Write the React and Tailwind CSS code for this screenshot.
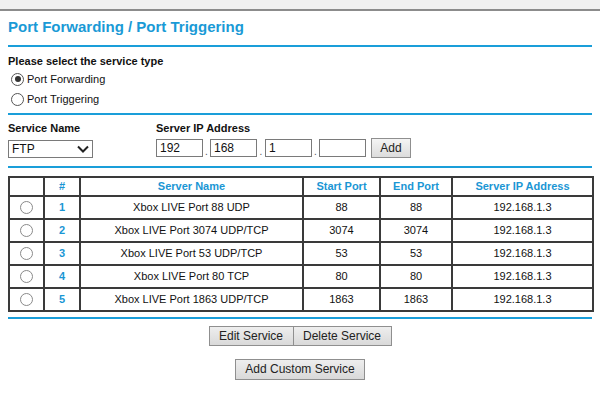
import React from 'react';

const rows = [
  { id: 1, name: 'Xbox LIVE Port 88 UDP', start: '88', end: '88', ip: '192.168.1.3' },
  { id: 2, name: 'Xbox LIVE Port 3074 UDP/TCP', start: '3074', end: '3074', ip: '192.168.1.3' },
  { id: 3, name: 'Xbox LIVE Port 53 UDP/TCP', start: '53', end: '53', ip: '192.168.1.3' },
  { id: 4, name: 'Xbox LIVE Port 80 TCP', start: '80', end: '80', ip: '192.168.1.3' },
  { id: 5, name: 'Xbox LIVE Port 1863 UDP/TCP', start: '1863', end: '1863', ip: '192.168.1.3' },
];

function Radio({ checked, light }) {
  return (
    <span
      className={`inline-flex items-center justify-center w-[13px] h-[13px] rounded-full border bg-white ${
        light ? 'border-[#8a8a8a]' : 'border-[#555]'
      }`}
    >
      {checked && <span className="w-[6px] h-[6px] rounded-full bg-[#333]" />}
    </span>
  );
}

function Divider({ className = '' }) {
  return <div className={`h-[2px] bg-[#1a9ed9] ${className}`} />;
}

function IpBox({ value }) {
  return (
    <input
      readOnly
      value={value}
      className="w-[47px] h-[18px] border border-[#7a7a7a] px-[3px] text-[12px] text-[#111] outline-none"
    />
  );
}

export default function App() {
  const cell = 'border-2 border-[#3a3a3a] text-center';
  return (
    <div className="w-[600px] h-[410px] bg-white text-[11px] text-[#111] font-['Liberation_Sans',Arial,sans-serif] overflow-hidden">
      {/* browser chrome strip */}
      <div className="h-[9px] bg-[#f1f1f1]" />
      <div className="h-[2px] bg-[#8c8c8c]" />

      <div className="px-2">
        <h1 className="mt-[7px] h-[18px] leading-[18px] text-[15px] font-bold text-[#1a9ad6]">
          Port Forwarding / Port Triggering
        </h1>
        <Divider className="mt-[9px]" />

        {/* service type */}
        <div className="mt-[7px] font-bold leading-[14px]">Please select the service type</div>
        <div className="mt-[1px] flex flex-col">
          <label className="flex items-center h-[20px] pl-[3px] gap-[3px]">
            <Radio checked />
            <span>Port Forwarding</span>
          </label>
          <label className="flex items-center h-[20px] pl-[3px] gap-[3px]">
            <Radio />
            <span>Port Triggering</span>
          </label>
        </div>
        <Divider className="mt-[4px]" />

        {/* service name / ip */}
        <div className="mt-[6px] flex">
          <div className="w-[148px]">
            <div className="font-bold leading-[14px]">Service Name</div>
            <div className="mt-[5px] w-[85px] h-[18px] border border-[#7a7a7a] flex items-center justify-between pl-[3px] pr-[3px] text-[12px]">
              <span>FTP</span>
              <svg width="12" height="8" viewBox="0 0 12 8" fill="none">
                <path d="M1 1.5 L6 6.5 L11 1.5" stroke="#222" strokeWidth="2" />
              </svg>
            </div>
          </div>
          <div>
            <div className="font-bold leading-[14px]">Server IP Address</div>
            <div className="mt-[3px] flex items-end">
              <div className="flex items-end pb-[1px]">
                <IpBox value="192" />
                <span className="w-[7px] text-center text-[10px] leading-[10px] text-[#555]">.</span>
                <IpBox value="168" />
                <span className="w-[8px] text-center text-[10px] leading-[10px] text-[#555]">.</span>
                <IpBox value="1" />
                <span className="w-[7px] text-center text-[10px] leading-[10px] text-[#555]">.</span>
                <IpBox value="" />
              </div>
              <button className="ml-[5px] w-[40px] h-[20px] border border-[#8f8f8f] bg-gradient-to-b from-[#f4f4f4] to-[#dcdcdc] text-[12px] text-[#222]">
                Add
              </button>
            </div>
          </div>
        </div>
        <Divider className="mt-[8px]" />

        {/* table */}
        <table className="mt-[8px] w-[584px] border-collapse table-fixed border-2 border-[#3a3a3a]">
          <colgroup>
            <col className="w-[35px]" />
            <col className="w-[36px]" />
            <col className="w-[223px]" />
            <col className="w-[77px]" />
            <col className="w-[72px]" />
            <col className="w-[141px]" />
          </colgroup>
          <thead>
            <tr className="h-[18px] text-[#1a96d4] font-bold">
              <th className={cell}></th>
              <th className={cell}>#</th>
              <th className={cell}>Server Name</th>
              <th className={cell}>Start Port</th>
              <th className={cell}>End Port</th>
              <th className={cell}>Server IP Address</th>
            </tr>
          </thead>
          <tbody>
            {rows.map((r) => (
              <tr key={r.id} className="h-[23px]">
                <td className={cell}>
                  <span className="flex justify-center">
                    <Radio light />
                  </span>
                </td>
                <td className={`${cell} text-[#1a96d4] font-bold`}>{r.id}</td>
                <td className={cell}>{r.name}</td>
                <td className={cell}>{r.start}</td>
                <td className={cell}>{r.end}</td>
                <td className={cell}>{r.ip}</td>
              </tr>
            ))}
          </tbody>
        </table>
        <Divider className="mt-[5px]" />

        {/* actions */}
        <div className="mt-[7px] flex flex-col items-center">
          <div className="flex">
            <button className="w-[85px] h-[20px] border border-[#8f8f8f] bg-gradient-to-b from-[#eeeeee] to-[#d9d9d9] text-[12px] text-[#222]">
              Edit Service
            </button>
            <button className="w-[98px] h-[20px] border border-l-0 border-[#8f8f8f] bg-gradient-to-b from-[#eeeeee] to-[#d9d9d9] text-[12px] text-[#222]">
              Delete Service
            </button>
          </div>
          <button className="mt-[13px] w-[130px] h-[21px] border border-[#8f8f8f] bg-gradient-to-b from-[#eeeeee] to-[#d9d9d9] text-[12px] text-[#222]">
            Add Custom Service
          </button>
        </div>
      </div>
    </div>
  );
}
